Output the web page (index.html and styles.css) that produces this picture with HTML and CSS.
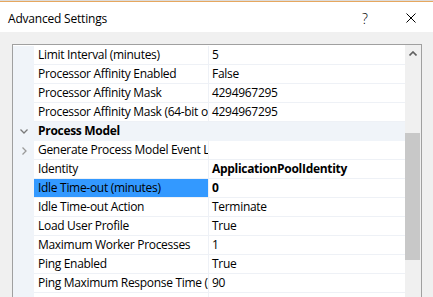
FILE: index.html
```html
<!DOCTYPE html>
<html lang="en">
<head>
  <meta charset="UTF-8">
  <title>Advanced Settings</title>
  <link rel="stylesheet" href="styles.css">
</head>
<body>

  <div class="window">
    <div class="titlebar">
      <span class="title">Advanced Settings</span>
      <span class="help">?</span>
      <span class="close">
        <svg width="10" height="10" viewBox="0 0 10 10"><path d="M0.5 0.5 L9.5 9.5 M9.5 0.5 L0.5 9.5" stroke="#000" stroke-width="1" fill="none"/></svg>
      </span>
    </div>

    <div class="content">
      <div class="propgrid">
        <div class="list">
          <div class="row"><div class="gutter"></div><div class="name">Limit Interval (minutes)</div><div class="value">5</div></div>
          <div class="row"><div class="gutter"></div><div class="name">Processor Affinity Enabled</div><div class="value">False</div></div>
          <div class="row"><div class="gutter"></div><div class="name">Processor Affinity Mask</div><div class="value">4294967295</div></div>
          <div class="row"><div class="gutter"></div><div class="name">Processor Affinity Mask (64-bit option)</div><div class="value">4294967295</div></div>

          <div class="row category">
            <div class="gutter">
              <svg width="8" height="5" viewBox="0 0 8 5"><path d="M0.5 0.5 L4 4 L7.5 0.5" stroke="#7a7a7a" stroke-width="1.3" fill="none"/></svg>
            </div>
            <div class="cat-name">Process Model</div>
          </div>

          <div class="row">
            <div class="gutter">
              <svg width="5" height="8" viewBox="0 0 5 8"><path d="M0.5 0.5 L4 4 L0.5 7.5" stroke="#9a9a9a" stroke-width="1.3" fill="none"/></svg>
            </div>
            <div class="name">Generate Process Model Event Log Entry</div><div class="value"></div>
          </div>
          <div class="row"><div class="gutter"></div><div class="name">Identity</div><div class="value bold">ApplicationPoolIdentity</div></div>
          <div class="row selected"><div class="gutter"></div><div class="name">Idle Time-out (minutes)</div><div class="value bold">0</div></div>
          <div class="row"><div class="gutter"></div><div class="name">Idle Time-out Action</div><div class="value">Terminate</div></div>
          <div class="row"><div class="gutter"></div><div class="name">Load User Profile</div><div class="value">True</div></div>
          <div class="row"><div class="gutter"></div><div class="name">Maximum Worker Processes</div><div class="value">1</div></div>
          <div class="row"><div class="gutter"></div><div class="name">Ping Enabled</div><div class="value">True</div></div>
          <div class="row"><div class="gutter"></div><div class="name">Ping Maximum Response Time (seconds)</div><div class="value">90</div></div>
          <div class="row"><div class="gutter"></div><div class="name"></div><div class="value"></div></div>
        </div>

        <div class="scrollbar">
          <div class="arrow">
            <svg width="8" height="5" viewBox="0 0 8 5"><path d="M0.5 4.5 L4 1 L7.5 4.5" stroke="#606060" stroke-width="1.6" fill="none"/></svg>
          </div>
          <div class="thumb"></div>
        </div>
      </div>
    </div>
  </div>

</body>
</html>
```

FILE: styles.css
```css
body {
  margin: 0;
  padding: 0;
  width: 433px;
  height: 297px;
  overflow: hidden;
  font-family: "Open Sans", "Noto Sans", Arial, sans-serif;
  font-size: 12px;
  color: #000;
  background: #f0f0f0;
}

.window {
  height: 297px;
  display: flex;
  flex-direction: column;
}

/* Title bar */
.titlebar {
  height: 30px;
  background: #fff;
  border-top: 1px solid #dcdcdc;
  box-shadow: inset 0 1px 0 #e6a75f;
  display: flex;
  align-items: center;
  flex-shrink: 0;
  padding-top: 1px;
}

.title {
  margin-left: 8px;
  font-size: 12px;
  letter-spacing: -0.2px;
  flex: 1;
  padding-top: 2px;
}

.help {
  font-size: 14px;
  font-weight: 300;
  margin-right: 38px;
  padding-top: 2px;
}

.close {
  display: flex;
  margin-right: 17px;
  padding-top: 1px;
}

/* Content */
.content {
  flex: 1;
  padding: 12px 0 0 12px;
  overflow: hidden;
}

.propgrid {
  width: 408px;
  height: 270px;
  border: 1px solid #a0a0a0;
  background: #fff;
  display: flex;
  letter-spacing: -0.3px;
}

.list {
  width: 392px;
  padding-top: 1px;
}

.row {
  display: flex;
  height: 19px;
  line-height: 18px;
}

.gutter {
  width: 21px;
  flex-shrink: 0;
  background: #f0f4f9;
  display: flex;
  align-items: center;
  justify-content: center;
  padding-left: 1px;
  box-sizing: border-box;
}

.name {
  width: 175px;
  flex-shrink: 0;
  box-sizing: border-box;
  padding-left: 4px;
  border-right: 1px solid #eef1f6;
  border-bottom: 1px solid #eef1f6;
  white-space: nowrap;
  overflow: hidden;
}

.value {
  flex: 1;
  padding-left: 3px;
  border-bottom: 1px solid #eef1f6;
  white-space: nowrap;
  overflow: hidden;
}

.bold {
  font-weight: bold;
}

.selected .name {
  background: #3399ff;
}

.category {
  background: #f0f4f9;
}

.cat-name {
  flex: 1;
  padding-left: 4px;
  font-weight: bold;
}

/* Scrollbar */
.scrollbar {
  width: 16px;
  background: #f0f0f0;
  display: flex;
  flex-direction: column;
}

.arrow {
  height: 17px;
  display: flex;
  align-items: center;
  justify-content: center;
  padding-right: 1px;
}

.thumb {
  margin-top: 71px;
  width: 15px;
  height: 127px;
  background: #c8c8c8;
}
```
